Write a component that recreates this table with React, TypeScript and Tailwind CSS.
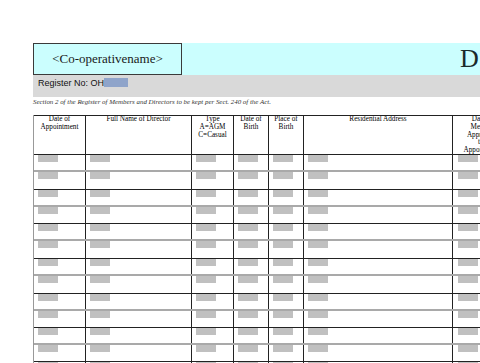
import React from "react";

interface Column {
  /** header lines */
  lines: string[];
  /** width incl. right border */
  width: string;
}

const columns: Column[] = [
  { lines: ["Date of", "Appointment"], width: "w-[52px]" },
  { lines: ["Full Name of Director"], width: "w-[106px]" },
  { lines: ["Type", "A=AGM", "C=Casual"], width: "w-[42px]" },
  { lines: ["Date of", "Birth"], width: "w-[35px]" },
  { lines: ["Place of", "Birth"], width: "w-[35px]" },
  { lines: ["Residential Address"], width: "w-[149px]" },
  { lines: ["Date of", "Meeting", "Approving", "the", "Appointment"], width: "w-[60px]" },
];

// row heights between the ruled lines
const rowHeights = [17, 18, 17, 17, 17, 18, 17, 18, 17, 17, 17, 17, 17];

const serif = { fontFamily: '"Liberation Serif", "Times New Roman", serif' };

const App: React.FC = () => {
  return (
    <div className="w-[480px] h-[363px] overflow-hidden bg-white pt-[43px]" style={serif}>
      {/* name band */}
      <div className="ml-[33px] h-[32px] flex bg-[#cbfefe] overflow-hidden">
        <div className="w-[149px] shrink-0 border border-[#3a3a3a] flex items-center justify-center text-[13px] text-[#1a1a1a]">
          &lt;Co-operativename&gt;
        </div>
        <div className="ml-[278px] shrink-0 whitespace-nowrap text-[26px] leading-[32px] tracking-[3px] text-[#1a2a2a]">
          Directors
        </div>
      </div>

      {/* register no */}
      <div
        className="ml-[33px] h-[22px] bg-[#d9d9d9] flex items-start pl-[5px] pt-[2px] text-[9px] leading-[12px] text-[#111]"
        style={{ fontFamily: '"Liberation Sans", Arial, sans-serif' }}
      >
        <span>Register No: OH</span>
        <span className="w-[24px] h-[9px] mt-[1px] bg-[#8fa4ca]"></span>
      </div>

      {/* note */}
      <div className="ml-[33px] h-[18px] pt-[1px] italic text-[6.9px] leading-[8px] text-[#333] whitespace-nowrap">
        Section 2 of the Register of Members and Directors to be kept per Sect. 240 of the Act.
      </div>

      {/* table */}
      <div className="ml-[33px] w-[560px] border-l border-[#999]">
        <div className="flex h-[40px] border-t border-b border-[#222]">
          {columns.map((col, i) => (
            <div
              key={i}
              className={`${col.width} shrink-0 border-r border-[#222] text-center text-[7.2px] leading-[7.8px] text-black whitespace-nowrap overflow-hidden`}
            >
              {col.lines.map((line, j) => (
                <div key={j}>{line}</div>
              ))}
            </div>
          ))}
        </div>
        {rowHeights.map((h, r) => (
          <div
            key={r}
            className={`flex ${h === 18 ? "h-[18px]" : "h-[17px]"} ${
              r % 2 === 0 ? "border-b-2 border-[#a9a9a9]" : "border-b border-[#222]"
            }`}
          >
            {columns.map((col, i) => (
              <div key={i} className={`${col.width} shrink-0 border-r border-[#222]`}>
                <div className={`${i === 6 ? "ml-[5px]" : "ml-[4px]"} w-[20px] h-[7px] bg-[#c0c0c0]`}></div>
              </div>
            ))}
          </div>
        ))}
      </div>
    </div>
  );
};

export default App;
